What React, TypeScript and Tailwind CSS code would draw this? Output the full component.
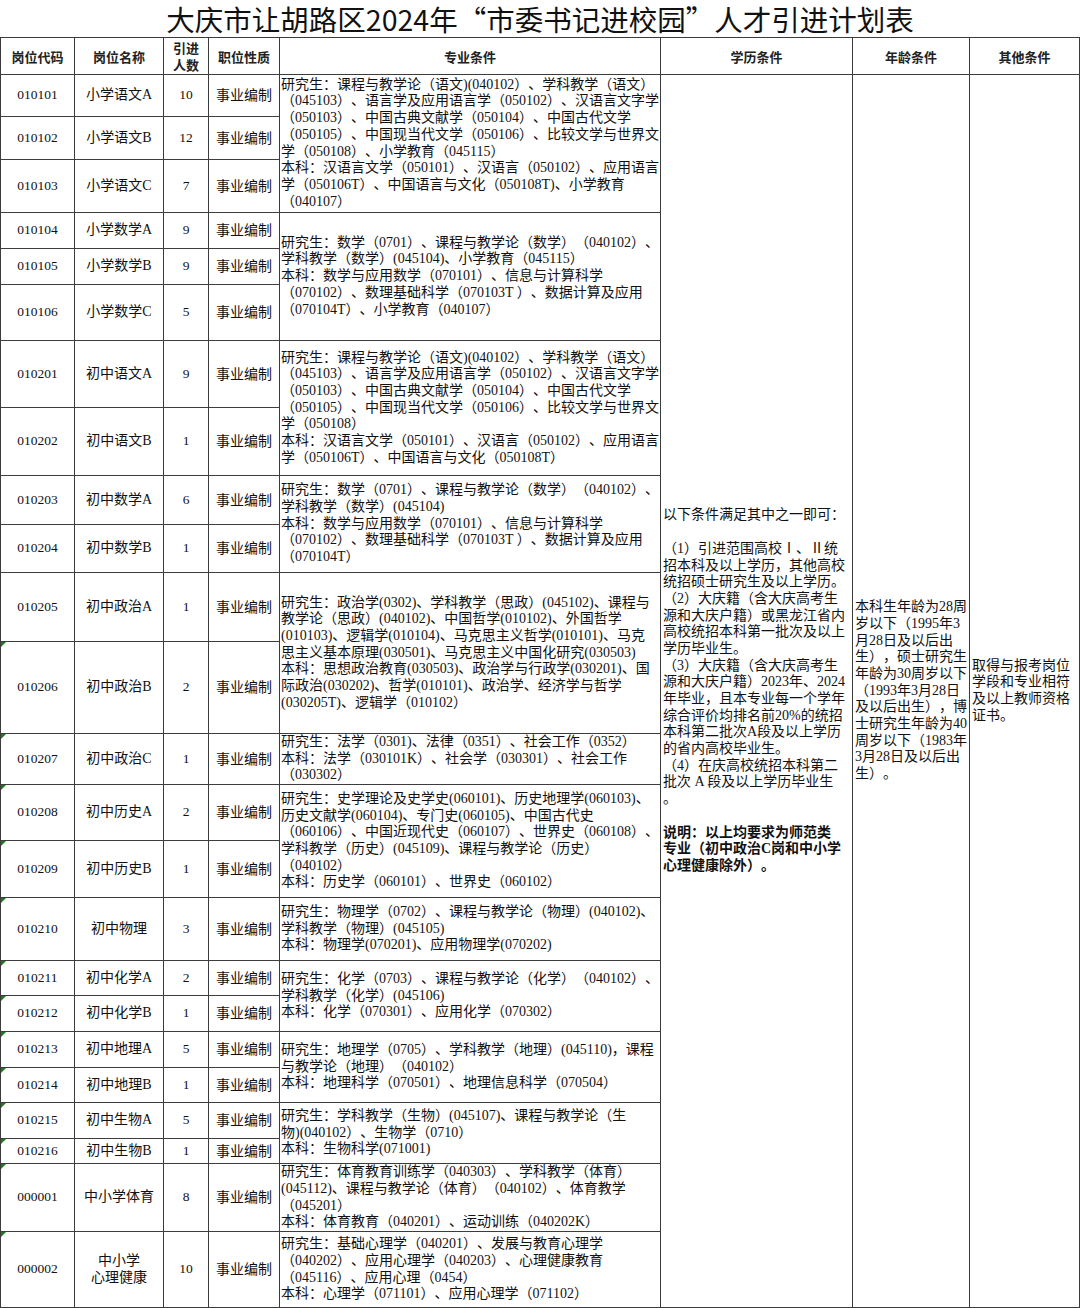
import React from "react";

type Spec = { span: string; lines: string[] };
type Row = { code: string; name: string[]; num: string; tri?: boolean; spec?: Spec };

const S1 = "[grid-row:span_1]";
const S2 = "[grid-row:span_2]";
const S3 = "[grid-row:span_3]";

const rows: Row[] = [
  {
    code: "010101", name: ["小学语文A"], num: "10",
    spec: {
      span: S3,
      lines: [
        "研究生：课程与教学论（语文)(040102）、学科教学（语文）",
        "（045103）、语言学及应用语言学（050102）、汉语言文字学",
        "（050103）、中国古典文献学（050104）、中国古代文学",
        "（050105）、中国现当代文学（050106）、比较文学与世界文",
        "学（050108）、小学教育（045115）",
        "本科：汉语言文学（050101）、汉语言（050102）、应用语言",
        "学（050106T）、中国语言与文化（050108T)、小学教育",
        "（040107）",
      ],
    },
  },
  { code: "010102", name: ["小学语文B"], num: "12" },
  { code: "010103", name: ["小学语文C"], num: "7" },
  {
    code: "010104", name: ["小学数学A"], num: "9",
    spec: {
      span: S3,
      lines: [
        "研究生：数学（0701）、课程与教学论（数学）（040102）、",
        "学科教学（数学）(045104)、小学教育（045115）",
        "本科：数学与应用数学（070101）、信息与计算科学",
        "（070102）、数理基础科学（070103T ）、数据计算及应用",
        "（070104T）、小学教育（040107）",
      ],
    },
  },
  { code: "010105", name: ["小学数学B"], num: "9" },
  { code: "010106", name: ["小学数学C"], num: "5" },
  {
    code: "010201", name: ["初中语文A"], num: "9",
    spec: {
      span: S2,
      lines: [
        "研究生：课程与教学论（语文)(040102）、学科教学（语文）",
        "（045103）、语言学及应用语言学（050102）、汉语言文字学",
        "（050103）、中国古典文献学（050104）、中国古代文学",
        "（050105）、中国现当代文学（050106）、比较文学与世界文",
        "学（050108）",
        "本科：汉语言文学（050101）、汉语言（050102）、应用语言",
        "学（050106T）、中国语言与文化（050108T）",
      ],
    },
  },
  { code: "010202", name: ["初中语文B"], num: "1" },
  {
    code: "010203", name: ["初中数学A"], num: "6",
    spec: {
      span: S2,
      lines: [
        "研究生：数学（0701）、课程与教学论（数学）（040102）、",
        "学科教学（数学）(045104)",
        "本科：数学与应用数学（070101）、信息与计算科学",
        "（070102）、数理基础科学（070103T ）、数据计算及应用",
        "（070104T）",
      ],
    },
  },
  { code: "010204", name: ["初中数学B"], num: "1" },
  {
    code: "010205", name: ["初中政治A"], num: "1",
    spec: {
      span: S2,
      lines: [
        "研究生：政治学(0302)、学科教学（思政）(045102)、课程与",
        "教学论（思政）(040102)、中国哲学(010102)、外国哲学",
        "(010103)、逻辑学(010104)、马克思主义哲学(010101)、马克",
        "思主义基本原理(030501)、马克思主义中国化研究(030503)",
        "本科：思想政治教育(030503)、政治学与行政学(030201)、国",
        "际政治(030202)、哲学(010101)、政治学、经济学与哲学",
        "(030205T)、逻辑学（010102）",
      ],
    },
  },
  { code: "010206", name: ["初中政治B"], num: "2", tri: true },
  {
    code: "010207", name: ["初中政治C"], num: "1", tri: true,
    spec: {
      span: S1,
      lines: [
        "研究生：法学（0301)、法律（0351）、社会工作（0352）",
        "本科：法学（030101K）、社会学（030301）、社会工作",
        "（030302）",
      ],
    },
  },
  {
    code: "010208", name: ["初中历史A"], num: "2", tri: true,
    spec: {
      span: S2,
      lines: [
        "研究生：史学理论及史学史(060101)、历史地理学(060103)、",
        "历史文献学(060104)、专门史(060105)、中国古代史",
        "（060106）、中国近现代史（060107）、世界史（060108）、",
        "学科教学（历史）(045109)、课程与教学论（历史）",
        "（040102）",
        "本科：历史学（060101）、世界史（060102）",
      ],
    },
  },
  { code: "010209", name: ["初中历史B"], num: "1", tri: true },
  {
    code: "010210", name: ["初中物理"], num: "3", tri: true,
    spec: {
      span: S1,
      lines: [
        "研究生：物理学（0702）、课程与教学论（物理）(040102)、",
        "学科教学（物理）(045105)",
        "本科：物理学(070201)、应用物理学(070202)",
      ],
    },
  },
  {
    code: "010211", name: ["初中化学A"], num: "2", tri: true,
    spec: {
      span: S2,
      lines: [
        "研究生：化学（0703）、课程与教学论（化学）（040102）、",
        "学科教学（化学）(045106)",
        "本科：化学（070301）、应用化学（070302）",
      ],
    },
  },
  { code: "010212", name: ["初中化学B"], num: "1", tri: true },
  {
    code: "010213", name: ["初中地理A"], num: "5", tri: true,
    spec: {
      span: S2,
      lines: [
        "研究生：地理学（0705）、学科教学（地理）(045110)，课程",
        "与教学论（地理）（040102）",
        "本科：地理科学（070501）、地理信息科学（070504）",
      ],
    },
  },
  { code: "010214", name: ["初中地理B"], num: "1", tri: true },
  {
    code: "010215", name: ["初中生物A"], num: "5", tri: true,
    spec: {
      span: S2,
      lines: [
        "研究生：学科教学（生物）(045107)、课程与教学论（生",
        "物)(040102）、生物学（0710）",
        "本科：生物科学(071001)",
      ],
    },
  },
  { code: "010216", name: ["初中生物B"], num: "1", tri: true },
  {
    code: "000001", name: ["中小学体育"], num: "8", tri: true,
    spec: {
      span: S1,
      lines: [
        "研究生：体育教育训练学（040303）、学科教学（体育）",
        "(045112)、课程与教学论（体育）（040102）、体育教学",
        "（045201）",
        "本科：体育教育（040201）、运动训练（040202K）",
      ],
    },
  },
  {
    code: "000002", name: ["中小学", "心理健康"], num: "10", tri: true,
    spec: {
      span: S1,
      lines: [
        "研究生：基础心理学（040201）、发展与教育心理学",
        "（040202）、应用心理学（040203）、心理健康教育",
        "（045116）、应用心理（0454）",
        "本科：心理学（071101）、应用心理学（071102）",
      ],
    },
  },
];

const eduLines: { t: string; b?: boolean }[] = [
  { t: "以下条件满足其中之一即可：" },
  { t: "" },
  { t: "（1）引进范围高校Ⅰ、Ⅱ统" },
  { t: "招本科及以上学历，其他高校" },
  { t: "统招硕士研究生及以上学历。" },
  { t: "（2）大庆籍（含大庆高考生" },
  { t: "源和大庆户籍）或黑龙江省内" },
  { t: "高校统招本科第一批次及以上" },
  { t: "学历毕业生。" },
  { t: "（3）大庆籍（含大庆高考生" },
  { t: "源和大庆户籍）2023年、2024" },
  { t: "年毕业，且本专业每一个学年" },
  { t: "综合评价均排名前20%的统招" },
  { t: "本科第二批次A段及以上学历" },
  { t: "的省内高校毕业生。" },
  { t: "（4）在庆高校统招本科第二" },
  { t: "批次 A 段及以上学历毕业生" },
  { t: "。" },
  { t: "" },
  { t: "说明：以上均要求为师范类", b: true },
  { t: "专业（初中政治C岗和中小学", b: true },
  { t: "心理健康除外）。", b: true },
];

const ageLines = [
  "本科生年龄为28周",
  "岁以下（1995年3",
  "月28日及以后出",
  "生），硕士研究生",
  "年龄为30周岁以下",
  "（1993年3月28日",
  "及以后出生），博",
  "士研究生年龄为40",
  "周岁以下（1983年",
  "3月28日及以后出",
  "生）。",
];

const otherLines = ["取得与报考岗位", "学段和专业相符", "及以上教师资格", "证书。"];

const headers = ["岗位代码", "岗位名称", "引进人数", "职位性质", "专业条件", "学历条件", "年龄条件", "其他条件"];

function Tri() {
  return (
    <div className="absolute left-0 top-0 h-0 w-0 border-t-[5px] border-r-[5px] border-t-[#1f7a1f] border-r-transparent" />
  );
}

export default function App() {
  return (
    <div className="w-[1080px] bg-white text-[#111] font-['Liberation_Serif','Noto_Sans_CJK_SC',serif] [text-spacing-trim:space-all]">
      <div className="flex h-[37px] items-center justify-center font-['Noto_Sans_CJK_SC',sans-serif] text-[28.5px] leading-[36px] text-[#111]">
        大庆市让胡路区2024年“市委书记进校园”人才引进计划表
      </div>
      <div className="grid grid-cols-[73px_88px_44px_70px_380px_191px_116px_109px] grid-rows-[36px_41px_42px_52px_35px_35px_55px_66px_67px_48px_47px_68px_91px_50px_55px_56px_62px_34px_35px_35px_34px_35px_24px_67px_75px] gap-px bg-[#3c3c3c] p-px">
        {headers.map((h) => (
          <div
            key={h}
            className="flex items-center justify-center bg-white text-center font-['Noto_Sans_CJK_SC',sans-serif] text-[13px] font-bold leading-[17px] text-[#222]"
          >
            {h === "引进人数" ? (
              <div className="flex flex-col items-center">
                <span>引进</span>
                <span>人数</span>
              </div>
            ) : (
              h
            )}
          </div>
        ))}
        {rows.map((r, i) => (
          <React.Fragment key={r.code}>
            <div className="relative flex items-center justify-center bg-white text-[13.5px]">
              {r.tri && <Tri />}
              {r.code}
            </div>
            <div className="flex flex-col items-center justify-center bg-white text-center text-[14px] leading-[16.7px]">
              {r.name.map((n) => (
                <div key={n}>{n}</div>
              ))}
            </div>
            <div className="flex items-center justify-center bg-white text-[13.5px]">{r.num}</div>
            <div className="flex items-center justify-center bg-white text-[14px]">事业编制</div>
            {r.spec && (
              <div
                className={`${r.spec.span} flex flex-col justify-center overflow-visible whitespace-nowrap bg-white pl-px text-[14px] leading-[16.7px]`}
              >
                {r.spec.lines.map((l, k) => (
                  <div key={k}>{l}</div>
                ))}
              </div>
            )}
            {i === 0 && (
              <>
                <div className="[grid-row:span_24] flex flex-col justify-center whitespace-nowrap bg-white pl-[2px] text-[14px] leading-[16.7px]">
                  {eduLines.map((l, k) => (
                    <div key={k} className={l.b ? "h-[16.7px] font-bold" : "h-[16.7px]"}>
                      {l.t}
                    </div>
                  ))}
                </div>
                <div className="[grid-row:span_24] flex flex-col justify-center whitespace-nowrap bg-white pl-[2px] text-[14px] leading-[16.7px]">
                  {ageLines.map((l, k) => (
                    <div key={k}>{l}</div>
                  ))}
                </div>
                <div className="[grid-row:span_24] flex flex-col justify-center whitespace-nowrap bg-white pl-[2px] text-[14px] leading-[16.7px]">
                  {otherLines.map((l, k) => (
                    <div key={k}>{l}</div>
                  ))}
                </div>
              </>
            )}
          </React.Fragment>
        ))}
      </div>
    </div>
  );
}
